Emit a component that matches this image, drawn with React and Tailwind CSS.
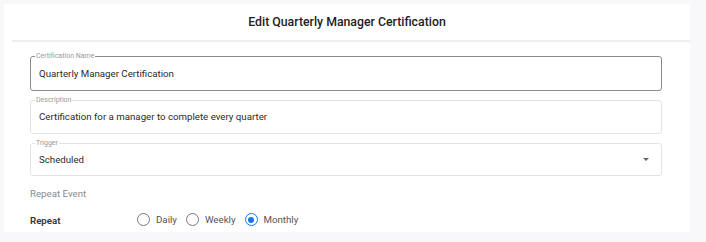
import React from "react";

function Field({ label, value, dark, select, h }) {
  return (
    <div
      className={`relative ${h} rounded-[3px] border flex items-center pl-[8px] pr-[8px] ${
        dark ? "border-[#8a8a8a]" : "border-[#e3e3e3]"
      }`}
    >
      <span className="absolute left-[4px] top-[-6px] bg-white px-[1px] text-[7px] leading-[10px] text-[#9a9a9a]">
        {label}
      </span>
      <span className="flex-1 text-[9.7px] text-[#2a2a2a] leading-none">{value}</span>
      {select && (
        <span className="mr-[4px] w-0 h-0 border-l-[3px] border-r-[3px] border-t-[3px] border-l-transparent border-r-transparent border-t-[#666]" />
      )}
    </div>
  );
}

function Radio({ label, checked }) {
  return (
    <div className="flex items-center gap-[6px]">
      <span
        className={`w-[13px] h-[13px] rounded-full border-[1.5px] flex items-center justify-center ${
          checked ? "border-[#1a73e8]" : "border-[#777]"
        }`}
      >
        {checked && <span className="w-[6px] h-[6px] rounded-full bg-[#1a73e8]" />}
      </span>
      <span className="text-[9.7px] text-[#555]">{label}</span>
    </div>
  );
}

export default function App() {
  return (
    <div
      className="w-[706px] h-[242px] bg-[#f8f8fa] pt-[4px] pl-[4px] overflow-hidden"
      style={{ fontFamily: "Roboto, 'Liberation Sans', sans-serif" }}
    >
      <div className="w-[686px] h-[228px] bg-white">
        <div className="h-[36px] flex items-center justify-center text-[12.3px] font-medium text-[#222]">
          Edit Quarterly Manager Certification
        </div>
        <div className="ml-[8px] h-[2px] bg-[#eeeeee]" />
        <div className="w-[632px] ml-[26px] mt-[14px] flex flex-col gap-[9px]">
          <Field label="Certification Name" value="Quarterly Manager Certification" dark h="h-[35px]" />
          <Field label="Description" value="Certification for a manager to complete every quarter" h="h-[34px]" />
          <Field label="Trigger" value="Scheduled" select h="h-[33px]" />
        </div>
        <div className="ml-[26px] mt-[12px] text-[9.7px] text-[#8a8a8a] leading-[12px]">Repeat Event</div>
        <div className="ml-[26px] mt-[14px] flex items-center">
          <div className="w-[107px] text-[9.7px] font-semibold text-[#333]">Repeat</div>
          <div className="flex items-center gap-[9px] -mt-[3px]">
            <Radio label="Daily" />
            <Radio label="Weekly" />
            <Radio label="Monthly" checked />
          </div>
        </div>
      </div>
    </div>
  );
}
